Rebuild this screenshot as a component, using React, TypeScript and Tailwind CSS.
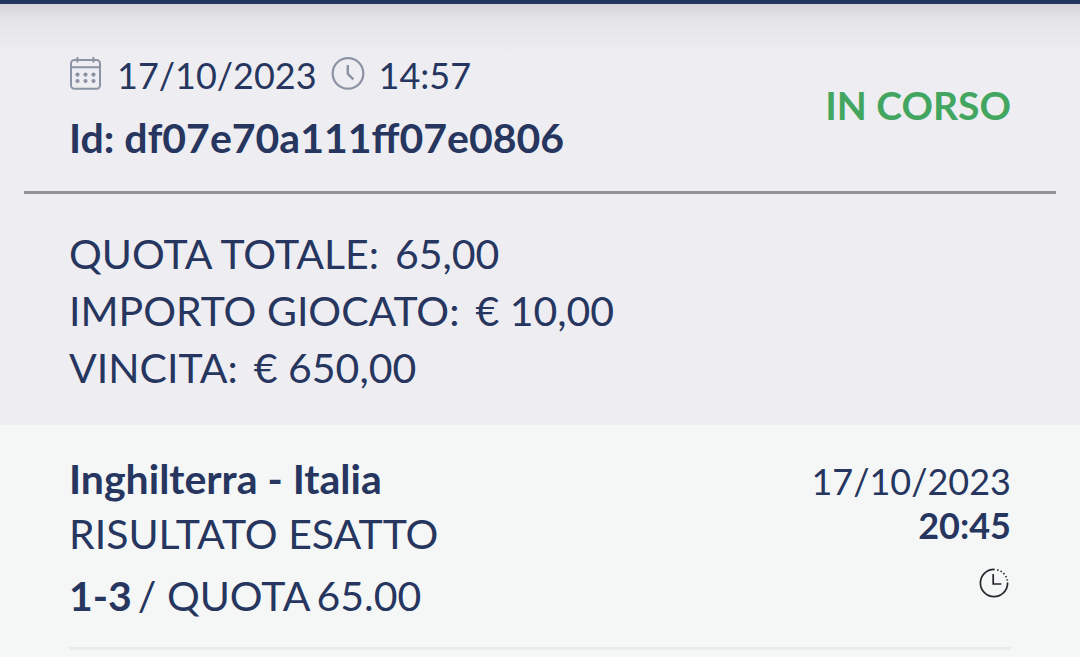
type Bet = {
  date: string;
  time: string;
  id: string;
  status: string;
};

type Match = {
  name: string;
  market: string;
  pick: string;
  odds: string;
  date: string;
  time: string;
};

const bet: Bet = {
  date: "17/10/2023",
  time: "14:57",
  id: "df07e70a111ff07e0806",
  status: "IN CORSO",
};

const totals = [
  { label: "QUOTA TOTALE:", value: "65,00" },
  { label: "IMPORTO GIOCATO:", value: "€ 10,00" },
  { label: "VINCITA:", value: "€ 650,00" },
];

const match: Match = {
  name: "Inghilterra - Italia",
  market: "RISULTATO ESATTO",
  pick: "1-3",
  odds: "65.00",
  date: "17/10/2023",
  time: "20:45",
};

const CalendarIcon = () => (
  <svg width="32" height="34" viewBox="0 0 32 34" fill="none" stroke="#8c93a4" strokeWidth="2" aria-hidden="true">
    <rect x="2" y="4" width="29" height="28.8" rx="3.5" />
    <path d="M2 11.2H31M8.4 1V6.5M24.4 1V6.5" />
    <g fill="#8c93a4" stroke="none">
      <circle cx="8.5" cy="18.6" r="2.1" />
      <circle cx="16.5" cy="18.6" r="2.1" />
      <circle cx="24.5" cy="18.6" r="2.1" />
      <circle cx="8.5" cy="25" r="2.1" />
      <circle cx="16.5" cy="25" r="2.1" />
      <circle cx="24.5" cy="25" r="2.1" />
    </g>
  </svg>
);

const ClockIcon = () => (
  <svg width="34" height="34" viewBox="0 0 34 34" fill="none" stroke="#8c93a4" strokeWidth="2.2" aria-hidden="true">
    <circle cx="17" cy="17.4" r="15.3" />
    <path d="M16.8 9V18L22.4 23.4" strokeWidth="2.5" />
  </svg>
);

const PendingIcon = () => (
  <svg width="30" height="30" viewBox="0 0 30 30" fill="none" stroke="#26262c" strokeWidth="1.7" aria-hidden="true">
    <path d="M15 1.4A13.6 13.6 0 1 0 28.6 15" strokeLinecap="round" />
    <path d="M18.2 1.8A13.6 13.6 0 0 1 28.4 12.6" strokeDasharray="1.4 2.2" />
    <path d="M14.2 6V16H22.4" />
  </svg>
);

const BetHeader = ({ date, time, id, status }: Bet) => (
  <header className="mx-6 flex items-center justify-between border-b-3 border-[#949496] px-[45px] pt-[47px] pb-[29px]">
    <div>
      <div className="flex items-center text-[36px] leading-[48px]">
        <span className="pb-1">
          <CalendarIcon />
        </span>
        <span className="ml-4">{date}</span>
        <span className="ml-[14px] pb-1">
          <ClockIcon />
        </span>
        <span className="ml-[14px]">{time}</span>
      </div>
      <h1 className="mt-[15px] text-[41px] leading-[48px] font-bold">Id: {id}</h1>
    </div>
    <strong className="pb-1 text-[39px] leading-[48px] font-bold text-[#42a660]">{status}</strong>
  </header>
);

const MatchRow = ({ name, market, pick, odds, date, time }: Match) => (
  <article className="mx-[69px] flex justify-between border-b-3 border-[#e9eaea] pt-[26px] pb-6">
    <div className="text-[41px] leading-[55px]">
      <h2 className="font-bold">{name}</h2>
      <p>{market}</p>
      <p className="mt-[7px] flex gap-[6px]">
        <b className="font-bold">{pick}</b>
        <span>/ QUOTA</span>
        <span>{odds}</span>
      </p>
    </div>
    <div className="flex flex-col items-end pt-2 text-[36px] leading-[44px]">
      <span>{date}</span>
      <span className="font-bold">{time}</span>
      <span className="mt-[21px] mr-0.5">
        <PendingIcon />
      </span>
    </div>
  </article>
);

export default function App() {
  return (
    <main className="min-h-screen bg-[#f5f7f7] font-['Lato',sans-serif] text-[#26365f]">
      <div className="h-1 bg-[#233661]" />
      <section className="bg-[#eeedf2] bg-linear-to-b from-[#d6d6da] via-[#e5e4e9] via-4% to-[#eeedf2] to-12%">
        <BetHeader {...bet} />
        <dl className="px-[69px] pt-[31px] pb-[29px] text-[41px] leading-[57px]">
          {totals.map(({ label, value }) => (
            <div key={label} className="flex gap-4">
              <dt>{label}</dt>
              <dd>{value}</dd>
            </div>
          ))}
        </dl>
      </section>
      <MatchRow {...match} />
    </main>
  );
}
